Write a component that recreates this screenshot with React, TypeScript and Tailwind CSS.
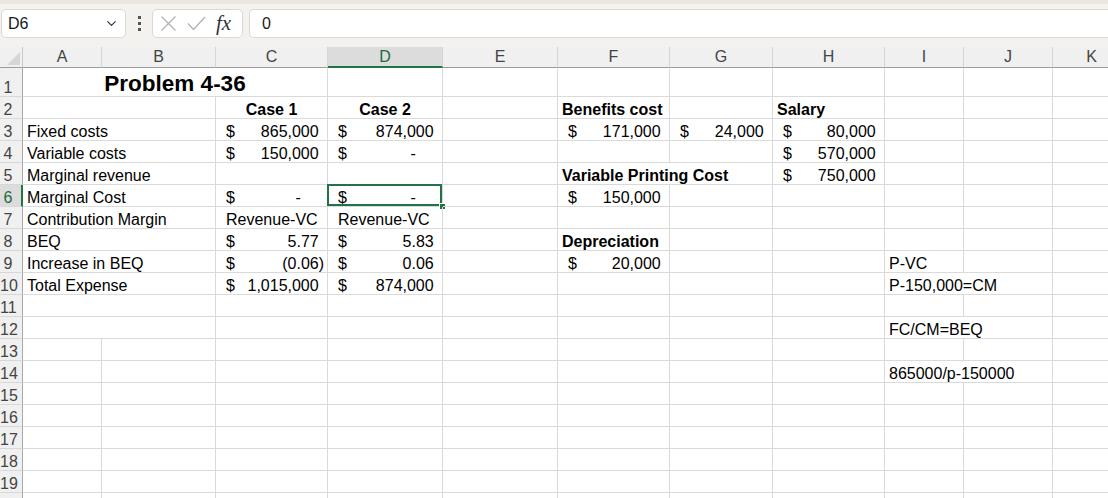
import { ChevronDown } from "lucide-react";

type Cell =
  | { kind: "text"; text: string; bold?: boolean; center?: boolean; indent?: boolean; big?: boolean }
  | { kind: "acct"; value: string };

const COLS = ["A", "B", "C", "D", "E", "F", "G", "H", "I", "J", "K"];

const txt = (text: string, opts: Partial<Extract<Cell, { kind: "text" }>> = {}): Cell => ({
  kind: "text",
  text,
  ...opts,
});
const money = (value: string): Cell => ({ kind: "acct", value });

const data: Record<string, Cell> = {
  A1: txt("Problem 4-36", { bold: true, center: true, big: true }),
  C2: txt("Case 1", { bold: true, center: true }),
  D2: txt("Case 2", { bold: true, center: true }),
  F2: txt("Benefits cost", { bold: true }),
  H2: txt("Salary", { bold: true }),
  A3: txt("Fixed costs"),
  C3: money("865,000"),
  D3: money("874,000"),
  F3: money("171,000"),
  G3: money("24,000"),
  H3: money("80,000"),
  A4: txt("Variable costs"),
  C4: money("150,000"),
  D4: money("-"),
  H4: money("570,000"),
  A5: txt("Marginal revenue"),
  F5: txt("Variable Printing Cost", { bold: true }),
  H5: money("750,000"),
  A6: txt("Marginal Cost"),
  C6: money("-"),
  D6: money("-"),
  F6: money("150,000"),
  A7: txt("Contribution Margin"),
  C7: txt("Revenue-VC", { indent: true }),
  D7: txt("Revenue-VC", { indent: true }),
  A8: txt("BEQ"),
  C8: money("5.77"),
  D8: money("5.83"),
  F8: txt("Depreciation", { bold: true }),
  A9: txt("Increase in BEQ"),
  C9: money("(0.06)"),
  D9: money("0.06"),
  F9: money("20,000"),
  I9: txt("P-VC"),
  A10: txt("Total Expense"),
  C10: money("1,015,000"),
  D10: money("874,000"),
  I10: txt("P-150,000=CM"),
  I12: txt("FC/CM=BEQ"),
  I14: txt("865000/p-150000"),
};

// cells whose right gridline is hidden (merged A:B rows, overflowing text)
const noRight = new Set([
  "A2", "A3", "A4", "A5", "A6", "A7", "A8", "A9", "A10", "A11", "A12",
  "F5", "I10", "I12", "I14",
]);

function CellContent({ cell }: { cell: Cell }) {
  if (cell.kind === "acct") {
    const v = cell.value;
    let shown;
    if (v === "-") {
      shown = (
        <span>
          -<span className="invisible">00)</span>
        </span>
      );
    } else if (v.startsWith("(")) {
      shown = <span>{v}</span>;
    } else {
      shown = (
        <span>
          {v}
          <span className="invisible">)</span>
        </span>
      );
    }
    return (
      <div className="flex h-full items-end justify-between pl-[10px] pr-[3px] leading-[17px]">
        <span>$</span>
        {shown}
      </div>
    );
  }
  if (cell.big) {
    return (
      <div className="flex h-full items-end justify-center text-[22.5px] font-bold leading-[25px] whitespace-nowrap">
        {cell.text}
      </div>
    );
  }
  return (
    <div
      className={`flex h-full items-end whitespace-nowrap leading-[17px] ${
        cell.center ? "justify-center" : cell.indent ? "pl-[10px]" : "pl-[4px]"
      } ${cell.bold ? "font-bold" : ""}`}
    >
      {cell.text}
    </div>
  );
}

function XIcon() {
  return (
    <svg width="17" height="17" viewBox="0 0 17 17" fill="none">
      <path d="M1.5 1.5L15.5 15.5M15.5 1.5L1.5 15.5" stroke="#b3b3b3" strokeWidth="1.3" />
    </svg>
  );
}

function CheckIcon() {
  return (
    <svg width="19" height="15" viewBox="0 0 19 15" fill="none">
      <path d="M1 7.5L6.5 13.5L18 1" stroke="#b3b3b3" strokeWidth="1.3" />
    </svg>
  );
}

function FormulaBar() {
  return (
    <div className="h-[47px] bg-[#f4f2ef] font-['Liberation_Sans',Arial,sans-serif]">
      <div className="h-[4px] bg-[#ebe6df]" />
      <div className="flex items-center pt-[5px] pl-[1px]">
        <div className="flex h-[29px] w-[125px] items-center justify-between rounded-[5px] border border-[#dcd8d3] bg-white pl-[6px] pr-[6px] text-[16px] text-[#1a1a1a]">
          <span>D6</span>
          <ChevronDown size={15} strokeWidth={2} className="text-[#3a3a3a]" />
        </div>
        <div className="flex w-[26px] flex-col items-center gap-[3px]">
          <span className="h-[3px] w-[3px] bg-[#555]" />
          <span className="h-[3px] w-[3px] bg-[#555]" />
          <span className="h-[3px] w-[3px] bg-[#555]" />
        </div>
        <div className="flex h-[29px] w-[91px] items-center gap-[10px] rounded-[5px] border border-[#dcd8d3] bg-white pl-[7px]">
          <XIcon />
          <CheckIcon />
          <span className="font-['Liberation_Serif',serif] text-[21px] italic leading-none text-[#333]">fx</span>
        </div>
        <div className="ml-[6px] flex h-[29px] flex-1 items-center rounded-l-[5px] border border-r-0 border-[#dcd8d3] bg-white pl-[12px] text-[16px] text-[#1a1a1a]">
          0
        </div>
      </div>
    </div>
  );
}

export default function App() {
  const cells: React.ReactNode[] = [];

  // header row
  cells.push(
    <div key="corner" className="relative border-r border-b border-r-[#c8c8c8] border-b-[#9c9c9c] bg-[#f0f0f0]">
      <svg className="absolute right-[2px] bottom-[2px]" width="13" height="13" viewBox="0 0 13 13">
        <polygon points="13,0 13,13 0,13" fill="#d6d6d6" />
      </svg>
    </div>
  );
  COLS.forEach((c) => {
    const sel = c === "D";
    cells.push(
      <div
        key={`h${c}`}
        className={`flex items-center justify-center border-r border-r-[#d4d4d4] text-[16px] leading-[18px] ${
          sel
            ? "border-b-2 border-b-[#217346] bg-[#dcdcdc] text-[#1d6b40]"
            : "border-b border-b-[#9c9c9c] bg-[#f0f0f0] text-[#444]"
        }`}
      >
        {c}
      </div>
    );
  });

  for (let r = 1; r <= 20; r++) {
    const selRow = r === 6;
    cells.push(
      <div
        key={`r${r}`}
        className={`flex items-end overflow-hidden border-b border-b-[#d8d8d8] text-[16px] leading-[17px] ${
          selRow
            ? "border-r-2 border-r-[#217346] bg-[#dcdcdc] text-[#1d6b40]"
            : "border-r border-r-[#a8a8a8] bg-[#f0f0f0] text-[#444]"
        }`}
      >
        {r < 20 && <span className="w-[16px] shrink-0 text-center">{r}</span>}
      </div>
    );
    COLS.forEach((c) => {
      const key = `${c}${r}`;
      if (r === 1 && (c === "B" || c === "C")) return;
      const cell = data[key];
      const span = r === 1 && c === "A" ? "col-span-3" : "";
      const hideRight = noRight.has(key);
      const isSel = key === "D6";
      cells.push(
        <div
          key={key}
          className={`relative border-b border-b-[#dadada] ${
            hideRight ? "" : "border-r border-r-[#dadada]"
          } ${span}`}
        >
          {cell && <CellContent cell={cell} />}
          {isSel && (
            <>
              <div className="pointer-events-none absolute -top-[1px] -left-[1px] right-0 bottom-0 border-2 border-[#217346]" />
              <div className="absolute -right-[4px] -bottom-[4px] h-[7px] w-[7px] border border-white bg-[#217346]" />
            </>
          )}
        </div>
      );
    });
  }

  return (
    <div className="h-[498px] w-[1108px] overflow-hidden bg-white">
      <FormulaBar />
      <div className="h-[451px] overflow-hidden font-['Liberation_Sans',Arial,sans-serif] text-[16px] text-black">
        <div className="grid w-[1131px] grid-cols-[23px_79px_114px_112px_115px_115px_112px_103px_112px_79px_89px_78px] grid-rows-[21px_29px_repeat(19,22px)]">
          {cells}
        </div>
      </div>
    </div>
  );
}
